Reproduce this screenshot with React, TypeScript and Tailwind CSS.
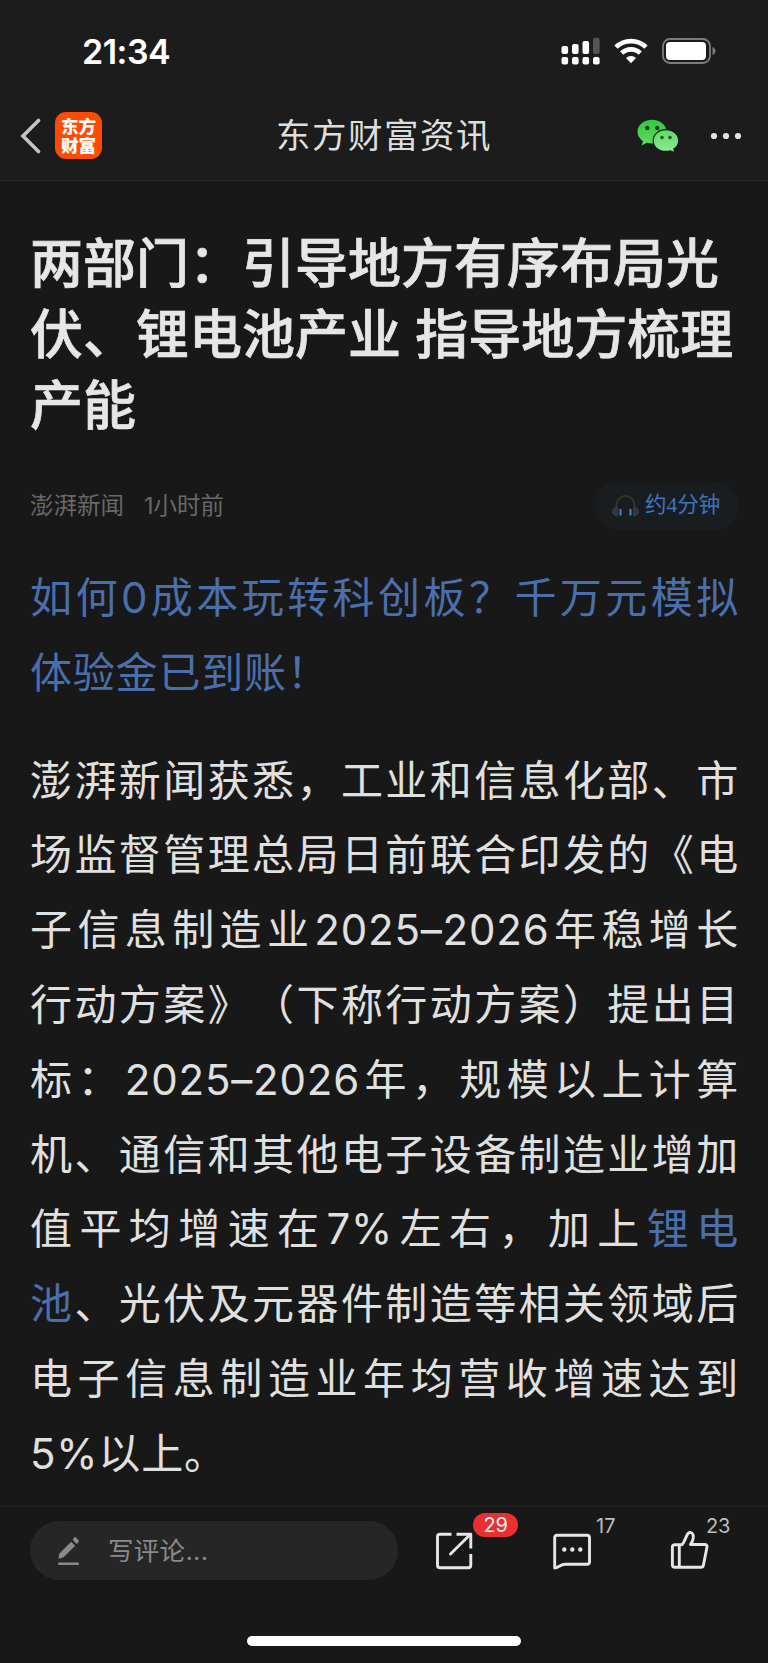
import type { ReactNode } from "react";

const StatusBar = () => (
    <div className="flex h-[102px] items-center justify-between pr-[52px] pl-[82px] text-white">
        <span className="mt-[2px] text-[34px] leading-none font-semibold tracking-[-0.5px]">21:34</span>
        <div className="flex items-center">
            <svg width="39" height="28" viewBox="0 0 39 28" fill="currentColor">
                <rect x="0.5" y="9" width="6.6" height="8" rx="2" />
                <rect x="11" y="7" width="6.6" height="10" rx="2" />
                <rect x="21.5" y="4" width="6.6" height="13" rx="2" />
                <rect x="32" y="0.8" width="6.6" height="16.2" rx="2" opacity="0.25" />
                <rect x="0.5" y="20" width="6.6" height="7.6" rx="2" />
                <rect x="11" y="20" width="6.6" height="7.6" rx="2" />
                <rect x="21.5" y="20" width="6.6" height="7.6" rx="2" />
                <rect x="32" y="20" width="6.6" height="7.6" rx="2" />
            </svg>
            <svg className="ml-[14px]" width="34" height="26" viewBox="0 0 34 26" fill="none" stroke="currentColor" strokeWidth="4.6">
                <path d="M2 9.2a21.5 21.5 0 0 1 30 0" />
                <path d="M7.7 15.2a13.2 13.2 0 0 1 18.6 0" />
                <path d="M17 25.2l-5-5.2a7.2 7.2 0 0 1 10 0z" fill="currentColor" stroke="none" />
            </svg>
            <svg className="ml-[14px]" width="54" height="26" viewBox="0 0 54 26">
                <rect x="1" y="1" width="47" height="24" rx="7" fill="none" stroke="#7c7c7c" strokeWidth="1.8" />
                <rect x="4" y="4" width="40" height="18" rx="4" fill="currentColor" />
                <path d="M50.5 9c4 1.6 4 6.4 0 8z" fill="#7c7c7c" />
            </svg>
        </div>
    </div>
);

const WechatIcon = () => (
    <svg width="42" height="34" viewBox="0 0 42 34">
        <defs>
            <linearGradient id="wechat-back" x1="0" y1="0" x2="0" y2="1">
                <stop offset="0" stopColor="#2fcb3c" />
                <stop offset="1" stopColor="#62d968" />
            </linearGradient>
            <linearGradient id="wechat-front" x1="0" y1="0" x2="0" y2="1">
                <stop offset="0" stopColor="#5fd767" />
                <stop offset="1" stopColor="#90ea92" />
            </linearGradient>
        </defs>
        <path d="M15 .8C6.9.8.5 6 .5 12.8c0 3.9 2.1 7.2 5.5 9.4L4.7 26.5l5-2.7c1.7.5 3.5.8 5.3.8 8 0 14.5-5.2 14.5-11.8S23 .8 15 .8z" fill="url(#wechat-back)" />
        <path d="M29 10.7c-7.3 0-12.8 4.8-12.8 11s5.5 10.7 12.8 10.7c1.5 0 3-.2 4.4-.6l4.5 2-1.1-3.8c3-2 4.9-5 4.9-8.3 0-6.2-5.5-11-12.700-11z" fill="url(#wechat-front)" stroke="#1c1c1c" strokeWidth="1.2" />
        <circle cx="10.3" cy="9" r="2.2" fill="#143d17" />
        <circle cx="20.3" cy="9" r="2.2" fill="#143d17" />
        <circle cx="25" cy="18.5" r="1.7" fill="#1f4d22" />
        <circle cx="33" cy="18.5" r="1.7" fill="#1f4d22" />
    </svg>
);

const NavBar = () => (
    <div className="grid h-[78px] grid-cols-[1fr_auto_1fr] items-center pb-[11px]">
        <div className="flex items-center pl-5">
            <svg width="22" height="36" viewBox="0 0 22 36" fill="none" stroke="#c4c4c4" strokeWidth="3.6" strokeLinecap="round">
                <path d="M18.5 2.5L3 18l15.5 15.5" />
            </svg>
            <div className="ml-[13px] flex size-[47px] flex-col items-center justify-center rounded-[11px] bg-[#fd4a05] text-[17.5px] leading-[19px] font-black text-white">
                <span>东方</span>
                <span>财富</span>
            </div>
        </div>
        <h1 className="mt-[2px] text-[34.5px] leading-none tracking-[1.5px] text-[#dedede]">东方财富资讯</h1>
        <div className="flex items-center justify-end pr-[26px]">
            <WechatIcon />
            <svg className="ml-[31px]" width="32" height="8" viewBox="0 0 32 8" fill="#e2e2e2">
                <circle cx="4" cy="4" r="3.1" />
                <circle cx="16" cy="4" r="3.1" />
                <circle cx="28" cy="4" r="3.1" />
            </svg>
        </div>
    </div>
);

const Line = ({ children, last }: { children: ReactNode; last?: boolean }) => (
    <span className={last ? "block whitespace-nowrap" : "-mr-px block whitespace-nowrap [text-align-last:justify]"}>{children}</span>
);

const ListenPill = () => (
    <div className="flex h-[49px] w-[143px] items-center rounded-full bg-[#1a1d20] pl-[17px]">
        <svg width="27" height="22" viewBox="0 0 27 22">
            <path d="M4.5 13V10a9 9 0 0 1 18 0v3" fill="none" stroke="#333436" strokeWidth="2" />
            <path d="M6 11.5C2.5 11.5 0 13.7 0 16.5s2.5 5 6 5zM21 11.5c3.5 0 6 2.2 6 5s-2.5 5-6 5z" fill="#36373a" />
            <path d="M8.5 14v6.5M18.5 14v6.5" stroke="#3c7bc8" strokeWidth="2.2" />
        </svg>
        <span className="ml-[6px] font-['Liberation_Serif','Noto_Sans_CJK_SC',serif] text-[21.5px] leading-none text-[#3a76c2]">约4分钟</span>
    </div>
);

const Article = () => (
    <article className="h-[1325px] px-[30px] [text-spacing-trim:space-all]">
        <h2 className="pt-[48px] text-[53px] leading-[71px] font-medium whitespace-nowrap text-[#e6e6e6] [-webkit-text-stroke:0.7px_#e6e6e6]">
            <span className="block">两部门：引导地方有序布局光</span>
            <span className="block">伏、锂电池产业 指导地方梳理</span>
            <span className="block">产能</span>
        </h2>
        <div className="mt-[39px] flex h-[49px] items-center text-[23.5px] text-[#686868]">
            <span>澎湃新闻</span>
            <span className="ml-[20px]">1小时前</span>
            <div className="ml-auto">
                <ListenPill />
            </div>
        </div>
        <div className="mt-[31px] text-[42px] leading-[74.8px] tracking-[0.8px] text-[#e0e0e0]">
            <p className="text-[#4a6fac]">
                <Line>如何0成本玩转科创板？千万元模拟</Line>
                <Line last>体验金已到账！</Line>
            </p>
            <p className="mt-[33px]">
                <Line>澎湃新闻获悉，工业和信息化部、市</Line>
                <Line>场监督管理总局日前联合印发的《电</Line>
                <Line>子信息制造业2025–2026年稳增长</Line>
                <Line>行动方案》（下称行动方案）提出目</Line>
                <Line>标：2025–2026年，规模以上计算</Line>
                <Line>机、通信和其他电子设备制造业增加</Line>
                <Line>
                    值平均增速在7%左右，加上<a className="text-[#4a6fac]">锂电</a>
                </Line>
                <Line>
                    <a className="text-[#4a6fac]">池</a>、光伏及元器件制造等相关领域后
                </Line>
                <Line>电子信息制造业年均营收增速达到</Line>
                <Line last>5%以上。</Line>
            </p>
        </div>
    </article>
);

const BottomBar = () => (
    <footer className="flex h-[157px] flex-col items-center border-t border-[#222222] text-[#e6e6e6]">
        <div className="flex w-full items-start pt-[14px] pl-[30px]">
            <div className="flex h-[59px] w-[368px] items-center rounded-full bg-[#262626] pl-[27px] text-[#8a8a8e]">
                <svg width="24" height="30" viewBox="0 0 24 30" fill="currentColor">
                    <path d="M14.2 5.7l4 4L6.6 21.3 1.5 23l.7-5.3zM15.7 4.1L17.3 1.3l1.2-.3 3.3 3.6-.2 1.3-2 2.2z" />
                    <rect x="1" y="26.5" width="21" height="2.4" rx="1" />
                </svg>
                <span className="ml-[27px] text-[25.5px] leading-none tracking-[0.3px]">写评论...</span>
            </div>
            <div className="relative mt-[11px] ml-[37px]">
                <svg width="38" height="38" viewBox="0 0 38 38" fill="none" stroke="currentColor" strokeWidth="2.9" strokeLinejoin="round">
                    <path d="M16.5 2.3H5a2.5 2.5 0 0 0-2.5 2.5v28.4A2.5 2.5 0 0 0 5 35.7h28.3a2.5 2.5 0 0 0 2.5-2.5V22" />
                    <path d="M21.5 2.3h14.3V16.5" />
                    <path d="M15.5 22L35 2.8" strokeLinecap="round" />
                </svg>
                <span className="absolute -top-[19px] left-[38px] flex h-[24px] w-[45px] items-center justify-center rounded-full bg-[#e83032] text-[20px] leading-none tracking-[-0.3px] text-[#fbe9e9]">29</span>
            </div>
            <div className="relative mt-[11px] ml-[79px]">
                <svg width="40" height="38" viewBox="0 0 40 38" fill="none" stroke="currentColor" strokeWidth="2.9" strokeLinejoin="round">
                    <path d="M5 3.3h30A2.5 2.5 0 0 1 37.5 5.8v24a2.5 2.5 0 0 1-2.5 2.5H13c-4.5 0-6.5 3.400-10.300 3.700V5.800A2.500 2.500 0 0 1 5 3.300z" />
                    <g fill="currentColor" stroke="none">
                        <circle cx="12.3" cy="17.5" r="2.2" />
                        <circle cx="20.3" cy="17.5" r="2.2" />
                        <circle cx="28.3" cy="17.5" r="2.2" />
                    </g>
                </svg>
                <span className="absolute -top-[17px] left-[44px] text-[20px] leading-[22px] text-[#bdbdbd]">17</span>
            </div>
            <div className="relative mt-[9px] ml-[78px]">
                <svg width="40" height="40" viewBox="0 0 40 40" fill="none" stroke="currentColor" strokeWidth="2.9" strokeLinejoin="round">
                    <path d="M4.5 14.8H12c2.5-2.5 3.7-8 5.7-10.9 1.7-2.4 4.9-1.5 5.5 1.3.6 3.2-.7 6.4-2.7 9.3h14.2c1.7 0 2.6 1 2.3 2.6l-3.6 18.2a2.5 2.5 0 0 1-2.5 2H5a2.6 2.6 0 0 1-2.6-2.6V17.2a2.4 2.4 0 0 1 2.100-2.400z" />
                    <path d="M9.3 14.8v22.5" />
                </svg>
                <span className="absolute -top-[15px] left-[36px] text-[20px] leading-[22px] tracking-[-0.3px] text-[#bdbdbd]">23</span>
            </div>
        </div>
        <div className="mt-[56px] h-[10px] w-[274px] rounded-full bg-white" />
    </footer>
);

export default function App() {
    return (
        <div lang="zh-CN" className="h-[1663px] w-[768px] overflow-hidden bg-[#181818] font-['Inter','Noto_Sans_CJK_SC',sans-serif]">
            <header className="h-[181px] border-b border-[#292929] bg-[#1c1c1c]">
                <StatusBar />
                <NavBar />
            </header>
            <Article />
            <BottomBar />
        </div>
    );
}
